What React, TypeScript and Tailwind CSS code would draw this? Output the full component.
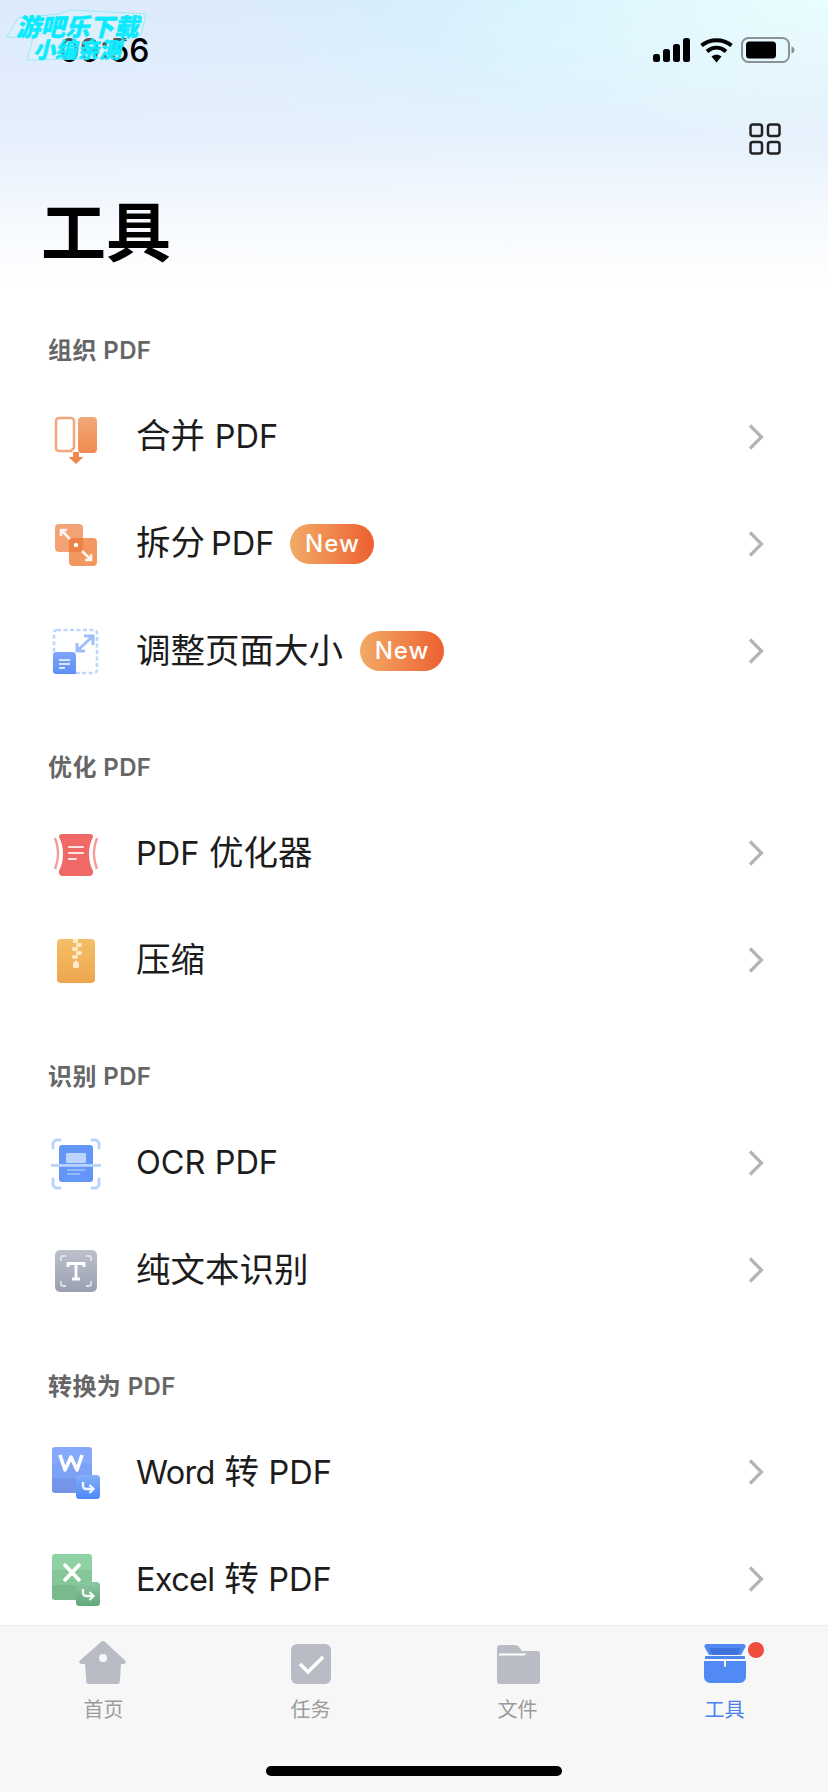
import type { ReactNode } from 'react';

const FONT = "font-['Inter','Noto_Sans_CJK_SC',sans-serif]";

function MergeIcon() {
  return (
    <svg width="56" height="56" viewBox="0 0 56 56">
      <defs>
        <linearGradient id="mg" x1="0" y1="0" x2="0" y2="1">
          <stop offset="0" stopColor="#f2a878" />
          <stop offset="1" stopColor="#f08a50" />
        </linearGradient>
      </defs>
      <path d="M11 9h12a3 3 0 0 1 3 3v27l-3 3H11a3 3 0 0 1-3-3V12a3 3 0 0 1 3-3z" fill="none" stroke="#f3a77a" strokeWidth="2.500" />
      <rect x="30" y="8" width="19" height="36" rx="4" fill="url(#mg)" />
      <path d="M25 43h6v5h4.500L28 55l-7.500-7H25z" fill="#f0884e" />
    </svg>
  );
}

function SplitIcon() {
  return (
    <svg width="56" height="56" viewBox="0 0 56 56">
      <rect x="7" y="8" width="28" height="28" rx="4" fill="#f2a275" />
      <rect x="21" y="22" width="28" height="28" rx="4" fill="#f2975f" />
      <rect x="21" y="22" width="14" height="14" fill="#ef8148" />
      <g fill="none" stroke="#fff" strokeWidth="2.600" opacity="0.9">
        <path d="M13 14l9 9M13 20v-6h6" />
        <path d="M43 44l-9-9M43 38v6h-6" />
      </g>
      <circle cx="28" cy="29" r="2.200" fill="#fff" />
    </svg>
  );
}

function ResizeIcon() {
  return (
    <svg width="56" height="56" viewBox="0 0 56 56">
      <defs>
        <linearGradient id="rs" x1="0" y1="0" x2="0" y2="1">
          <stop offset="0" stopColor="#7ea6f8" />
          <stop offset="1" stopColor="#5f8ff6" />
        </linearGradient>
      </defs>
      <rect x="6" y="7" width="43" height="43" rx="3" fill="none" stroke="#bdd6fd" strokeWidth="2.600" strokeDasharray="4 2.500" />
      <path d="M8 29h16a4 4 0 0 1 4 4v18H8a3 3 0 0 1-3-3V32a3 3 0 0 1 3-3z" fill="url(#rs)" />
      <path d="M11 37h11M11 41h11M11 45h6" stroke="#d7e4fd" strokeWidth="1.800" />
      <path d="M29 28l16-15M36 13h9v9M29 20v8h8" fill="none" stroke="#9dbefa" strokeWidth="3" />
    </svg>
  );
}

function OptimizeIcon() {
  return (
    <svg width="56" height="56" viewBox="0 0 56 56">
      <path d="M14 9h28a3 3 0 0 1 3 3c-3 6-4 11-4 17s1 11 4 17a4 4 0 0 1-3 5H14a4 4 0 0 1-3-5c3-6 4-11 4-17s-1-11-4-17a3 3 0 0 1 3-3z" fill="#ef6a66" />
      <path d="M7 13c4 10 4 21 0 31M49 13c-4 10-4 21 0 31" fill="none" stroke="#f59a96" strokeWidth="2.400" />
      <path d="M21 22h14M21 28h14M21 34h7" stroke="#fde3e1" strokeWidth="2.200" strokeLinecap="round" />
    </svg>
  );
}

function ZipIcon() {
  return (
    <svg width="56" height="56" viewBox="0 0 56 56">
      <defs>
        <linearGradient id="zp" x1="0" y1="0" x2="0" y2="1">
          <stop offset="0" stopColor="#f5bf66" />
          <stop offset="1" stopColor="#eea64f" />
        </linearGradient>
      </defs>
      <rect x="9" y="7" width="38" height="44" rx="4" fill="url(#zp)" />
      <g fill="#fdeacb">
        <rect x="25" y="7" width="5" height="4" rx="1" />
        <rect x="28" y="11" width="6" height="4" rx="2" />
        <rect x="24" y="15" width="6" height="4" rx="2" />
        <rect x="28" y="19" width="6" height="4" rx="2" />
        <rect x="24" y="23" width="6" height="4" rx="2" />
        <path d="M28 28l3 3v4a1 1 0 0 1-1 1h-4a1 1 0 0 1-1-1v-4z" />
      </g>
    </svg>
  );
}

function OcrIcon() {
  return (
    <svg width="56" height="56" viewBox="0 0 56 56">
      <path d="M5 13V9a4 4 0 0 1 4-4h3M44 5h3a4 4 0 0 1 4 4v4M51 44v5a4 4 0 0 1-4 4h-3M12 53H9a4 4 0 0 1-4-4v-5" fill="none" stroke="#b9d3fc" strokeWidth="2.800" strokeLinecap="round" />
      <rect x="11" y="10" width="34" height="37" rx="3" fill="#6496f8" />
      <rect x="18" y="18" width="20" height="10" rx="1" fill="#bcd3fc" />
      <rect x="3" y="29" width="50" height="2.800" fill="#b9d3fc" />
      <path d="M19 35h18M19 39h13" stroke="#c5d9fd" strokeWidth="1" />
    </svg>
  );
}

function TextIcon() {
  return (
    <svg width="56" height="56" viewBox="0 0 56 56">
      <defs>
        <linearGradient id="tx" x1="0" y1="0" x2="0" y2="1">
          <stop offset="0" stopColor="#bcc1cc" />
          <stop offset="1" stopColor="#9aa0b0" />
        </linearGradient>
      </defs>
      <rect x="7" y="8" width="42" height="42" rx="5" fill="url(#tx)" />
      <path d="M13 19v-3a2 2 0 0 1 2-2h3M38 14h3a2 2 0 0 1 2 2v3M43 39v3a2 2 0 0 1-2 2h-3M18 44h-3a2 2 0 0 1-2-2v-3" fill="none" stroke="#dfe2e8" strokeWidth="1.800" />
      <path d="M20 25v-3.500h16V25M28 21.500V37M24 37h8" fill="none" stroke="#fff" strokeWidth="2.800" />
    </svg>
  );
}

function ConvertIcon({ letter, top, mid, low, badgeTop, badgeLow, id }: { letter: 'W' | 'X'; top: string; mid: string; low: string; badgeTop: string; badgeLow: string; id: string }) {
  return (
    <svg width="56" height="56" viewBox="0 0 56 56">
      <defs>
        <linearGradient id={id} x1="0" y1="0" x2="0" y2="1">
          <stop offset="0" stopColor={badgeTop} />
          <stop offset="1" stopColor={badgeLow} />
        </linearGradient>
      </defs>
      <path d="M7 3h34a3 3 0 0 1 3 3v13H4V6a3 3 0 0 1 3-3z" fill={top} />
      <rect x="4" y="19" width="40" height="15" fill={mid} />
      <path d="M4 34h40v12a3 3 0 0 1-3 3H7a3 3 0 0 1-3-3z" fill={low} />
      {letter === 'W' ? (
        <path d="M11 12l5 15 6-13 6 13 5-15" fill="none" stroke="#fff" strokeWidth="3.600" strokeLinejoin="round" transform="translate(1 -1)" />
      ) : (
        <path d="M16 13l16 17M32 13L16 30" fill="none" stroke="#fff" strokeWidth="3.800" />
      )}
      <rect x="28" y="31" width="24" height="24" rx="3.500" fill={`url(#${id})`} />
      <path d="M35 38v4a3 3 0 0 0 3 3h7M41.500 41l4 4-4 4" fill="none" stroke="#fff" strokeWidth="2.400" opacity="0.9" />
    </svg>
  );
}

function Chevron() {
  return (
    <svg width="20" height="30" viewBox="0 0 20 30">
      <path d="M3 3.500l11.500 11.500L3 26.500" fill="none" stroke="#b4b4b4" strokeWidth="3.200" />
    </svg>
  );
}

function NewBadge({ gap }: { gap: string }) {
  return (
    <span className={`${gap} flex h-[40px] w-[84px] items-center justify-center rounded-[20px] bg-gradient-to-r from-[#f1aa66] to-[#ec5f30] text-[24px] font-medium tracking-[1px] text-white`}>
      New
    </span>
  );
}

// latin runs are a bit smaller than the cjk ones
function L({ children }: { children: string }) {
  return <span className="text-[32.500px]">{children}</span>;
}

// Word and Excel sit tighter than the PDF runs
function Tight({ children }: { children: string }) {
  return <span className="text-[32.500px] tracking-[-0.700px]">{children}</span>;
}

function Row({ icon, title, badge }: { icon: ReactNode; title: ReactNode; badge?: ReactNode }) {
  return (
    <div className="flex h-[107px] items-center pl-[48px] pr-[61px]">
      <div className="mr-[32px] h-[56px] w-[56px] shrink-0">{icon}</div>
      <span className="text-[34.500px] leading-[44px] whitespace-nowrap text-[#1c1c1c]">{title}</span>
      {badge}
      <div className="ml-auto">
        <Chevron />
      </div>
    </div>
  );
}

function SectionLabel({ children }: { children: string }) {
  return (
    <div className="flex h-[95.500px] items-end px-[48px] pb-[16px]">
      <span className="text-[24px] leading-[32px] font-semibold tracking-[0.4px] text-[#666666]">{children}</span>
    </div>
  );
}

function StatusBar() {
  return (
    <div className="relative flex h-[26px] items-center justify-between pl-[59px] pr-[33px]">
      <span className="mt-[1px] text-[32px] leading-[26px] font-medium text-black">09:56</span>
      <div className="flex items-center">
        <svg width="38" height="24" viewBox="0 0 38 24" className="mr-[9px]">
          <rect x="0" y="16" width="7" height="8" rx="2.500" />
          <rect x="10" y="11" width="7" height="13" rx="2.500" />
          <rect x="20" y="6" width="7" height="18" rx="2.500" />
          <rect x="30" y="0" width="7" height="24" rx="2.500" />
        </svg>
        <svg width="33" height="25" viewBox="0 0 33 25" className="mr-[8px]">
          <path d="M1.500 7.500C10 .5 23 .5 31.500 7.500" fill="none" stroke="#000" strokeWidth="4" />
          <path d="M7 13.500c6-5 13-5 19 0" fill="none" stroke="#000" strokeWidth="4" />
          <path d="M11.500 18.500c3-2.500 7-2.500 10 0l-5 6z" />
        </svg>
        <svg width="54" height="26" viewBox="0 0 54 26">
          <rect x="1" y="1" width="47" height="24" rx="6.500" fill="none" stroke="#8b9194" strokeWidth="2" />
          <rect x="5" y="4.500" width="30" height="17" rx="3.500" />
          <path d="M50.500 9.500c2 .5 3 2 3 3.500s-1 3-3 3.500z" fill="#8b9194" />
        </svg>
      </div>
    </div>
  );
}

function Watermark() {
  return (
    <div className="absolute left-0 top-0 h-[70px] w-[150px]">
      <svg width="150" height="70" viewBox="0 0 150 70" className="absolute left-0 top-0">
        <path d="M7 37L18 18l42-4 10-4 76 4-5 21-23 7-3 16-88 2 6-22z" fill="#dff6fd" fillOpacity="0.35" stroke="#9beaf8" strokeWidth="1" />
      </svg>
      <div className="absolute left-[16px] top-[12px] whitespace-nowrap text-[24.500px] leading-[30px] font-black italic text-[#0ceaff] [-webkit-text-stroke:0.4px_#0ceaff]">游吧乐下载</div>
      <div className="absolute left-[33px] top-[37px] whitespace-nowrap text-[22px] leading-[26px] font-black italic text-[#0ceaff] [-webkit-text-stroke:0.4px_#0ceaff]">小编亲测</div>
    </div>
  );
}

function Tab({ icon, label, active }: { icon: ReactNode; label: string; active?: boolean }) {
  return (
    <div className="flex flex-1 flex-col items-center">
      <div className="h-[56px] w-[56px]">{icon}</div>
      <span className={`mt-[5px] text-[20px] leading-[26px] ${active ? 'text-[#4a80ee]' : 'text-[#9b9b9b]'}`}>{label}</span>
    </div>
  );
}

export default function App() {
  return (
    <div className={`${FONT} relative flex h-[1792px] w-[828px] flex-col overflow-hidden bg-white`}>
      <div className="min-h-0 flex-1 overflow-hidden">
        {/* Header */}
        <div className="h-[287.500px] bg-[linear-gradient(to_bottom,rgba(255,255,255,0)_0%,rgba(255,255,255,0.25)_45%,rgba(255,255,255,0.78)_80%,#ffffff_100%),radial-gradient(ellipse_at_100%_0%,#e9feff_0%,rgba(233,254,255,0)_36%),radial-gradient(ellipse_at_66%_8%,#d3f1fd_0%,rgba(211,241,253,0)_42%),linear-gradient(to_right,#dceafc,#dcecfc)] pt-[37px]">
          <StatusBar />
          <div className="mt-[60px] flex justify-end pr-[47px]">
            <svg width="32" height="32" viewBox="0 0 32 32" fill="none" stroke="#222" strokeWidth="2.500">
              <rect x="1.500" y="1.500" width="11.500" height="11.500" rx="2.500" />
              <rect x="19" y="1.500" width="11.500" height="11.500" rx="2.500" />
              <rect x="1.500" y="19" width="11.500" height="11.500" rx="2.500" />
              <rect x="19" y="19" width="11.500" height="11.500" rx="2.500" />
            </svg>
          </div>
          <h1 className="mt-[45px] pl-[41px] text-[65px] leading-[65px] font-bold text-black">工具</h1>
        </div>

        <SectionLabel>组织 PDF</SectionLabel>
        <Row icon={<MergeIcon />} title={<>合并 <L>PDF</L></>} />
        <Row icon={<SplitIcon />} title={<>拆分<span className="ml-[6px]"><L>PDF</L></span></>} badge={<NewBadge gap="ml-[16px]" />} />
        <Row icon={<ResizeIcon />} title="调整页面大小" badge={<NewBadge gap="ml-[17px]" />} />

        <SectionLabel>优化 PDF</SectionLabel>
        <Row icon={<OptimizeIcon />} title={<><L>PDF</L> 优化器</>} />
        <Row icon={<ZipIcon />} title="压缩" />

        <SectionLabel>识别 PDF</SectionLabel>
        <Row icon={<OcrIcon />} title={<L>OCR PDF</L>} />
        <Row icon={<TextIcon />} title="纯文本识别" />

        <SectionLabel>转换为 PDF</SectionLabel>
        <Row icon={<ConvertIcon id="wd" letter="W" top="#86aafb" mid="#7ca1f5" low="#7396e8" badgeTop="#85b0fa" badgeLow="#4d87f8" />} title={<><Tight>Word</Tight> 转 <L>PDF</L></>} />
        <Row icon={<ConvertIcon id="xl" letter="X" top="#8ed1a2" mid="#84c698" low="#7ab88e" badgeTop="#8cc8a0" badgeLow="#62a77c" />} title={<><Tight>Excel</Tight> 转 <L>PDF</L></>} />
      </div>

      {/* Tab bar */}
      <div className="h-[167px] shrink-0 border-t border-[#ebebeb] bg-[#f7f7f7] pt-[10px]">
        <div className="flex">
          <Tab
            label="首页"
            icon={
              <svg width="56" height="56" viewBox="0 0 56 56">
                <path d="M27 5c.7 0 1.300.3 1.800.8l20.500 19c1 1.200.4 3.200-1.500 3.200H45l-1.200 18c-.1 1.200-1 2-2.200 2H12.500c-1.200 0-2.100-.8-2.200-2L9 28H5.200c-1.900 0-2.500-2-1.500-3.200l21.500-19c.5-.5 1.100-.8 1.800-.8z" fill="#b9bcc4" />
                <circle cx="27" cy="22" r="4" fill="#f7f7f7" />
              </svg>
            }
          />
          <Tab
            label="任务"
            icon={
              <svg width="56" height="56" viewBox="0 0 56 56">
                <rect x="8" y="8" width="40" height="40" rx="6" fill="#b9bcc4" />
                <path d="M17 28l8 8 15-15" fill="none" stroke="#fff" strokeWidth="3.500" />
              </svg>
            }
          />
          <Tab
            label="文件"
            icon={
              <svg width="56" height="56" viewBox="0 0 56 56">
                <path d="M10 9h15c2 0 3.500 1 4.500 2.500L32 15h15a3 3 0 0 1 3 3v27a3 3 0 0 1-3 3H10a3 3 0 0 1-3-3V12a3 3 0 0 1 3-3z" fill="#b9bcc4" />
                <path d="M9 19.500h25l3-2H9z" fill="#fff" />
              </svg>
            }
          />
          <Tab
            active
            label="工具"
            icon={
              <div className="relative h-[56px] w-[56px]">
                <svg width="56" height="56" viewBox="0 0 56 56">
                  <path d="M10 8h36c2 0 3 1.500 2.500 3L44 19H12L7.500 11C7 9.500 8 8 10 8z" fill="#4f88f2" />
                  <path d="M12 12h32l-3.500 7h-25z" fill="#3f74dc" />
                  <path d="M9 20h38a1 1 0 0 1 1 1v2H8v-2a1 1 0 0 1 1-1z" fill="#4f88f2" />
                  <path d="M7 25h20v5a1 1 0 0 0 2 0v-5h20v16a6 6 0 0 1-6 6H13a6 6 0 0 1-6-6z" fill="#528af5" />
                </svg>
                <span className="absolute left-[51px] top-[6px] h-[16px] w-[16px] rounded-full bg-[#ef4d3e]" />
              </div>
            }
          />
        </div>
      </div>

      {/* Home indicator */}
      <div className="absolute bottom-[16px] left-[266px] h-[10px] w-[296px] rounded-full bg-black" />
      <Watermark />
    </div>
  );
}
